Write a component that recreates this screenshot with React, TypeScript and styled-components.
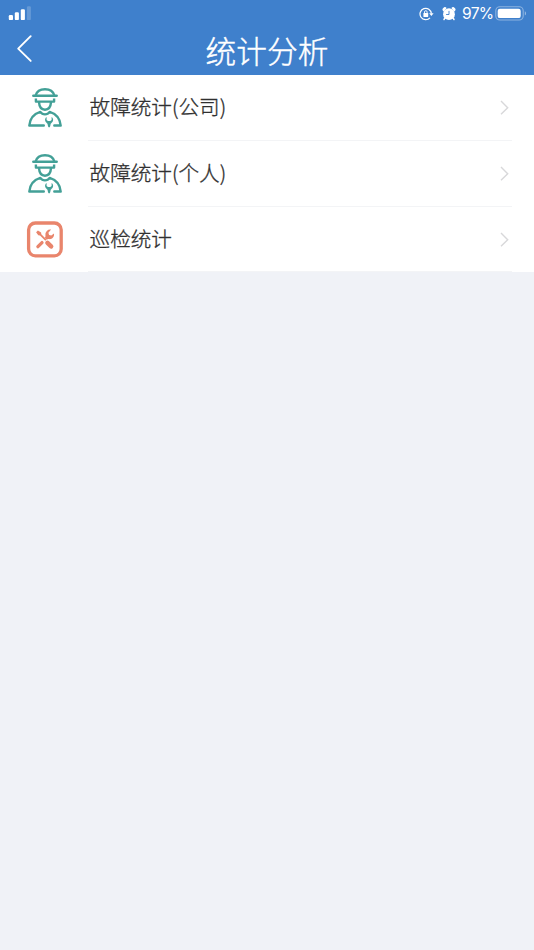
import React from "react";
import styled, { createGlobalStyle } from "styled-components";

const GlobalStyle = createGlobalStyle`
  * { box-sizing: border-box; }
  body {
    margin: 0;
    background: #f0f2f7;
    font-family: "Noto Sans CJK SC", sans-serif;
  }
`;

const Screen = styled.div`
  min-height: 100vh;
  background: #f0f2f7;
`;

const Header = styled.header`
  height: 75px;
  background: #3f80cc;
  color: #fff;
`;

const StatusBar = styled.div`
  height: 27px;
  display: flex;
  align-items: center;
  justify-content: space-between;
  padding: 0 7px 0 8px;
`;

const StatusGroup = styled.div`
  display: flex;
  align-items: center;
`;

const AlarmSlot = styled.span`
  display: flex;
  margin: 0 6px 0 8px;
`;

const Percent = styled.span`
  width: 31px;
  margin: 1px 2px 0 0;
  font: 400 15.6px/20px Inter, "Liberation Sans", sans-serif;
  letter-spacing: -0.7px;
  white-space: nowrap;
`;

const NavBar = styled.div`
  height: 48px;
  display: grid;
  grid-template-columns: 60px 1fr 60px;
  align-items: start;
`;

const BackButton = styled.button`
  display: flex;
  width: 48px;
  height: 44px;
  padding: 7px 0 0 16px;
  border: 0;
  background: none;
  color: inherit;
`;

const Title = styled.h1`
  margin: 0;
  font-size: 30.7px;
  font-weight: 300;
  line-height: 46px;
  text-align: center;
  -webkit-text-stroke: 0.4px currentColor;
`;

const List = styled.main`
  background: #fff;
`;

const Row = styled.div`
  height: 65.8px;
  display: grid;
  grid-template-columns: 88px 1fr 22px;
`;

const IconCell = styled.div`
  padding: 11px 0 0 25px;
`;

const RowBody = styled.div`
  display: flex;
  justify-content: space-between;
  padding: 0 3px 0 1.6px;
  border-bottom: 1px solid #f3f4f6;
`;

const Label = styled.span`
  color: #303030;
  font-size: 20.6px;
  font-weight: 300;
  line-height: 62px;
  -webkit-text-stroke: 0.32px currentColor;
`;

const Arrow = styled.svg`
  margin-top: 25px;
`;

const Signal = () => (
  <svg width="24" height="16" viewBox="0 0 24 16" fill="#fff">
    <rect x=".8" y="9.1" width="4.2" height="5" rx="1.2" />
    <rect x="6.8" y="6.3" width="4.1" height="7.8" rx="1.2" />
    <rect x="12.8" y="3.2" width="4.1" height="10.9" rx="1.2" />
    <rect x="18.9" y=".2" width="4" height="13.9" rx="1.2" opacity=".2" />
  </svg>
);

const RotationLock = () => (
  <svg width="15" height="14" viewBox="0 0 15 14" fill="none" stroke="#fff">
    <path d="M11 10.8A5.7 5.7 0 1 1 12.4 6.5" strokeWidth="1.2" />
    <path d="M10.2 6.3h4.4l-2.2 2.8z" fill="#fff" stroke="none" />
    <rect x="4.4" y="6" width="4.8" height="4" rx=".6" fill="#fff" stroke="none" />
    <path d="M5.5 6.5V5a1.3 1.3 0 0 1 2.6 0v1.5" strokeWidth=".9" />
  </svg>
);

const Alarm = () => (
  <svg width="14" height="14" viewBox="0 0 14 14" fill="#fff">
    <circle cx="7" cy="7.2" r="5.9" />
    <path d="M1.2 4.2A2.1 2.1 0 0 1 4.6 1L2 4.6zM12.8 4.2A2.1 2.1 0 0 0 9.4 1L12 4.6z" />
    <path d="M2.8 11.2L2 12.5M11.2 11.2l.8 1.3" stroke="#fff" strokeWidth="1.5" strokeLinecap="round" />
    <path d="M7 3.9v3.6H4.1" fill="none" stroke="#3f80cc" strokeWidth=".9" />
  </svg>
);

const Battery = () => (
  <svg width="32" height="15" viewBox="0 0 32 15" fill="none">
    <rect x=".8" y=".8" width="27.4" height="13.2" rx="4" stroke="#fff" strokeOpacity=".4" strokeWidth="1.1" />
    <rect x="2.7" y="2.7" width="23" height="9.4" rx="2.2" fill="#fff" />
    <path d="M29.8 5.2c1.7.7 1.7 3.6 0 4.3z" fill="#fff" opacity=".45" />
  </svg>
);

const WorkerIcon = () => (
  <svg width="40" height="43" viewBox="0 0 40 43" fill="none" stroke="#43a097" strokeWidth="2.4" strokeLinecap="round" strokeLinejoin="round">
    <path d="M8.3 9.7h23.4" />
    <path d="M10.6 9.5C11.8 5.3 15.4 3.2 20 3.2s8.2 2.1 9.4 6.3" />
    <path d="M10.9 12.6v3h18.2v-3" strokeLinecap="butt" />
    <path d="M14 16.2c.3 4.7 2.6 7.5 6 7.5s5.7-2.8 6-7.5" />
    <path d="M18.8 39.5H4.3c.6-6.4 4.6-11.6 11-13.6 1.2 1.8 2.8 2.5 4.7 2.5s3.5-.7 4.7-2.5c6.4 2 10.4 7.2 11 13.6h-6.4" />
    <path d="M21.6 30.9c-1.4 1-1.9 2.7-1.3 4.2.5 1.4 1.5 2 2.2 2.6l.5 2.6c.3 1.5 1.9 1.5 2.2 0l.5-2.6c.7-.6 1.7-1.2 2.2-2.6.6-1.5.1-3.2-1.3-4.2v3.2l-1.4 1h-2.2l-1.4-1z" fill="#43a097" stroke="none" />
  </svg>
);

const ToolsIcon = () => (
  <svg width="40" height="43" viewBox="0 0 40 43" fill="none" stroke="#e9856c" strokeLinecap="round">
    <rect x="3.6" y="5" width="32.6" height="32.8" rx="6.8" strokeWidth="3.3" />
    <path d="M11.1 14.3l1.8-1.8 3.2 2 .2 1.8 5.2 5.2-1.2 1.2-5.3-5.2-1.7-.2z" fill="#e9856c" stroke="none" />
    <path d="M22.5 24.9l3.6 3.4" strokeWidth="4.6" />
    <path d="M12.9 28.7l4.1-4.1" strokeWidth="3.3" />
    <path d="M26.1 11.6a4.9 4.9 0 0 0-5.7 5.6c.2 1.2.2 1.6-.7 2.5l2.1 2c.8-.8 1.3-.8 2.2-.6 3.1.4 5.5-2.1 5-5.6l-2.7 2.1-2.2-.5-.7-2.4z" fill="#e9856c" stroke="none" />
  </svg>
);

const rows = [
  { label: "故障统计(公司)", icon: <WorkerIcon /> },
  { label: "故障统计(个人)", icon: <WorkerIcon /> },
  { label: "巡检统计", icon: <ToolsIcon /> },
];

export default function App() {
  return (
    <Screen>
      <GlobalStyle />
      <Header>
        <StatusBar>
          <Signal />
          <StatusGroup>
            <RotationLock />
            <AlarmSlot>
              <Alarm />
            </AlarmSlot>
            <Percent>97%</Percent>
            <Battery />
          </StatusGroup>
        </StatusBar>
        <NavBar>
          <BackButton aria-label="返回">
            <svg width="18" height="29" viewBox="0 0 18 29" fill="none" stroke="#fff" strokeWidth="1.9" strokeLinecap="round" strokeLinejoin="round">
              <path d="M14.7 2.2L2.2 14.6l12.5 12.3" />
            </svg>
          </BackButton>
          <Title>统计分析</Title>
        </NavBar>
      </Header>
      <List>
        {rows.map((row) => (
          <Row key={row.label}>
            <IconCell>{row.icon}</IconCell>
            <RowBody>
              <Label>{row.label}</Label>
              <Arrow width="9" height="16" viewBox="0 0 9 16" fill="none" stroke="#d8d8da" strokeWidth="1.4">
                <path d="M1 1.1l6.7 6.6L1 14.3" />
              </Arrow>
            </RowBody>
          </Row>
        ))}
      </List>
    </Screen>
  );
}
